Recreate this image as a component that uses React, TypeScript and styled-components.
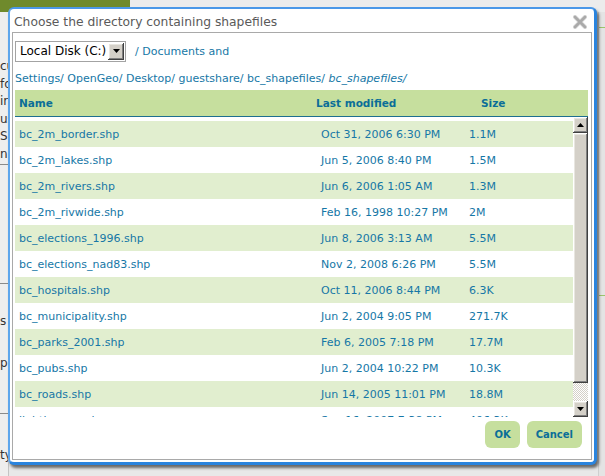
import React from "react";
import styled, { createGlobalStyle } from "styled-components";

const GlobalStyle = createGlobalStyle`
  html, body { margin: 0; padding: 0; }
  body {
    width: 605px;
    height: 476px;
    overflow: hidden;
    background: #e8e8e8;
    font-family: "DejaVu Sans", Verdana, sans-serif;
  }
`;

/* ---------- backdrop page ---------- */
const Page = styled.div`
  position: relative;
  width: 605px;
  height: 476px;
  overflow: hidden;
  background: #e8e8e8;
  display: flex;
  flex-direction: column;
`;

const TopBand = styled.div`
  display: flex;
  height: 12px;
  background: #ececec;
`;

const OliveBar = styled.div`
  width: 130px;
  background: #6f8a2c;
`;

const PageBody = styled.div`
  flex: 1;
  display: flex;
  justify-content: space-between;
`;

const LeftColumn = styled.div`
  width: 8px;
  overflow: hidden;
  display: flex;
  flex-direction: column;
  padding-top: 46px;
  background: #eeeeee;
  border-right: 1px solid #c4c4c4;
  font-size: 12px;
  color: #333;
  line-height: 17.6px;
  white-space: nowrap;
`;

const Fragment = styled.div<{ $gap?: number }>`
  margin-top: ${(p) => p.$gap ?? 0}px;
`;

const Rule = styled.div<{ $gap?: number }>`
  margin-top: ${(p) => p.$gap ?? 0}px;
  height: 1px;
  background: #8a8a8a;
`;

const RightColumn = styled.div`
  width: 6px;
  background: #e4e4e4;
  border-left: 1px solid #cfcfcf;
  display: flex;
  flex-direction: column;
  padding-top: 15px;
`;

const GreenRule = styled.div<{ $gap?: number }>`
  margin-top: ${(p) => p.$gap ?? 0}px;
  height: 1px;
  background: #9cc46c;
`;

/* ---------- dialog ---------- */
const Dialog = styled.div`
  position: absolute;
  left: 8px;
  top: 7px;
  width: 589px;
  height: 458px;
  box-sizing: border-box;
  background: #ffffff;
  border-style: solid;
  border-color: #4b98e8 #2a84de #2a84de #5ea6ec;
  border-width: 2px 3px 3px 2px;
  border-radius: 6px;
  box-shadow: 2px 3px 3px rgba(0, 0, 0, 0.55);
  display: flex;
  flex-direction: column;
`;

const TitleBar = styled.div`
  height: 23px;
  box-sizing: border-box;
  padding: 2px 7px 0 4px;
  display: flex;
  align-items: center;
  justify-content: space-between;
`;

const Title = styled.div`
  font-size: 12.3px;
  color: #5a5a5a;
  white-space: nowrap;
`;

const CloseButton = styled.button`
  border: none;
  background: none;
  padding: 0;
  width: 14px;
  height: 14px;
  display: flex;
  cursor: pointer;
`;

const Panel = styled.div`
  flex: 1;
  margin: 0 2px 2px 2px;
  border: 1px solid #a9a9a9;
  padding: 0 3px 0 2px;
  display: flex;
  flex-direction: column;
  min-height: 0;
`;

const PathBar = styled.div`
  padding-top: 5px;
  line-height: 27px;
  height: 52px;
  font-size: 11px;
  color: #1677a6;
`;

const Select = styled.div`
  display: inline-flex;
  vertical-align: middle;
  align-items: center;
  justify-content: space-between;
  box-sizing: border-box;
  width: 111px;
  height: 21px;
  margin: -2px 9px 0 0;
  padding: 0 1px 0 4px;
  border: 1px solid #a3a3a3;
  background: #fff;
  font-size: 12px;
  color: #000;
  line-height: 19px;
`;

const Bevel = styled.div`
  background: #d4d0c8;
  box-shadow: inset -1px -1px #404040, inset 1px 1px #ffffff,
    inset -2px -2px #808080, inset 2px 2px #e8e6e0;
  display: flex;
  align-items: center;
  justify-content: center;
`;

const DropButton = styled(Bevel)`
  width: 16px;
  height: 17px;
`;

const Crumb = styled.a<{ $current?: boolean }>`
  color: inherit;
  text-decoration: none;
  font-style: ${(p) => (p.$current ? "italic" : "normal")};
`;

const Header = styled.div`
  height: 26px;
  border-bottom: 1px solid #1e6f90;
  background: #c6df9e;
  display: grid;
  grid-template-columns: 297px 165px 1fr;
  align-items: center;
  padding-left: 4px;
  font-size: 10.5px;
  font-weight: bold;
  color: #0b6e98;
`;

const ListArea = styled.div`
  height: 300px;
  display: flex;
`;

const Rows = styled.div`
  flex: 1;
  overflow: hidden;
  padding-top: 4px;
`;

const Row = styled.div<{ $alt: boolean }>`
  height: 26px;
  display: grid;
  grid-template-columns: 302px 148px 1fr;
  align-items: center;
  padding-left: 4px;
  background: ${(p) => (p.$alt ? "#e1eecf" : "#ffffff")};
  font-size: 11px;
  color: #1677a6;
  white-space: nowrap;
`;

const Scrollbar = styled.div`
  width: 15px;
  display: flex;
  flex-direction: column;
`;

const ScrollButton = styled(Bevel)`
  height: 16px;
`;

const Thumb = styled(Bevel)`
  height: 250px;
`;

const Track = styled.div`
  flex: 1;
  background-color: #d4d0c8;
  background-image: conic-gradient(#ffffff 25%, #d4d0c8 0 50%, #ffffff 0 75%, #d4d0c8 0);
  background-size: 2px 2px;
`;

const Footer = styled.div`
  display: flex;
  justify-content: flex-end;
  gap: 7px;
  padding: 4px 6px 0 0;
`;

const ActionButton = styled.button`
  height: 27px;
  border: none;
  border-radius: 6px;
  background: #c6df9e;
  padding: 0 9px;
  font-family: "DejaVu Sans", Verdana, sans-serif;
  font-size: 10px;
  font-weight: bold;
  color: #0b6e98;
  cursor: pointer;
`;

const Arrow = ({ up }: { up?: boolean }) => (
  <svg width="7" height="4" viewBox="0 0 7 4">
    <polygon points={up ? "3.5,0 7,4 0,4" : "0,0 7,0 3.5,4"} fill="#000" />
  </svg>
);

const CloseIcon = () => (
  <svg width="14" height="14" viewBox="0 0 14 14">
    <path d="M2 2 L12 12 M12 2 L2 12" stroke="#dcdcdc" strokeWidth="4.2" strokeLinecap="round" />
    <path d="M2 2 L12 12 M12 2 L2 12" stroke="#aaaaaa" strokeWidth="2.8" strokeLinecap="round" />
  </svg>
);

const files: [string, string, string][] = [
  ["bc_2m_border.shp", "Oct 31, 2006 6:30 PM", "1.1M"],
  ["bc_2m_lakes.shp", "Jun 5, 2006 8:40 PM", "1.5M"],
  ["bc_2m_rivers.shp", "Jun 6, 2006 1:05 AM", "1.3M"],
  ["bc_2m_rivwide.shp", "Feb 16, 1998 10:27 PM", "2M"],
  ["bc_elections_1996.shp", "Jun 8, 2006 3:13 AM", "5.5M"],
  ["bc_elections_nad83.shp", "Nov 2, 2008 6:26 PM", "5.5M"],
  ["bc_hospitals.shp", "Oct 11, 2006 8:44 PM", "6.3K"],
  ["bc_municipality.shp", "Jun 2, 2004 9:05 PM", "271.7K"],
  ["bc_parks_2001.shp", "Feb 6, 2005 7:18 PM", "17.7M"],
  ["bc_pubs.shp", "Jun 2, 2004 10:22 PM", "10.3K"],
  ["bc_roads.shp", "Jun 14, 2005 11:01 PM", "18.8M"],
  ["lighthouses.shp", "Sep 16, 2007 7:38 PM", "406.3K"],
];

const crumbs = ["OpenGeo/", "Desktop/", "guestshare/", "bc_shapefiles/"];

export default function App() {
  return (
    <>
      <GlobalStyle />
      <Page>
        <TopBand>
          <OliveBar />
        </TopBand>
        <PageBody>
          <LeftColumn>
            <Fragment>cu</Fragment>
            <Fragment>fo</Fragment>
            <Fragment>ir</Fragment>
            <Fragment>us</Fragment>
            <Fragment>S</Fragment>
            <Fragment>n</Fragment>
            <Rule />
            <Rule $gap={118} />
            <Fragment $gap={29}>s</Fragment>
            <Fragment $gap={25}>p</Fragment>
            <Rule $gap={40} />
            <Fragment $gap={33}>ty</Fragment>
          </LeftColumn>
          <RightColumn>
            <GreenRule />
            <GreenRule $gap={267} />
          </RightColumn>
        </PageBody>

        <Dialog>
          <TitleBar>
            <Title>Choose the directory containing shapefiles</Title>
            <CloseButton aria-label="Close">
              <CloseIcon />
            </CloseButton>
          </TitleBar>
          <Panel>
            <PathBar>
              <Select>
                <span>Local Disk (C:)</span>
                <DropButton>
                  <Arrow />
                </DropButton>
              </Select>
              <Crumb>
                / Documents and
                <br />
                Settings/
              </Crumb>{" "}
              {crumbs.map((c) => (
                <React.Fragment key={c}>
                  <Crumb>{c}</Crumb>{" "}
                </React.Fragment>
              ))}
              <Crumb $current>bc_shapefiles/</Crumb>
            </PathBar>
            <Header>
              <span>Name</span>
              <span>Last modified</span>
              <span>Size</span>
            </Header>
            <ListArea>
              <Rows>
                {files.map(([name, date, size], i) => (
                  <Row key={name} $alt={i % 2 === 0}>
                    <span>{name}</span>
                    <span>{date}</span>
                    <span>{size}</span>
                  </Row>
                ))}
              </Rows>
              <Scrollbar>
                <ScrollButton>
                  <Arrow up />
                </ScrollButton>
                <Thumb />
                <Track />
                <ScrollButton>
                  <Arrow />
                </ScrollButton>
              </Scrollbar>
            </ListArea>
            <Footer>
              <ActionButton>OK</ActionButton>
              <ActionButton>Cancel</ActionButton>
            </Footer>
          </Panel>
        </Dialog>
      </Page>
    </>
  );
}
